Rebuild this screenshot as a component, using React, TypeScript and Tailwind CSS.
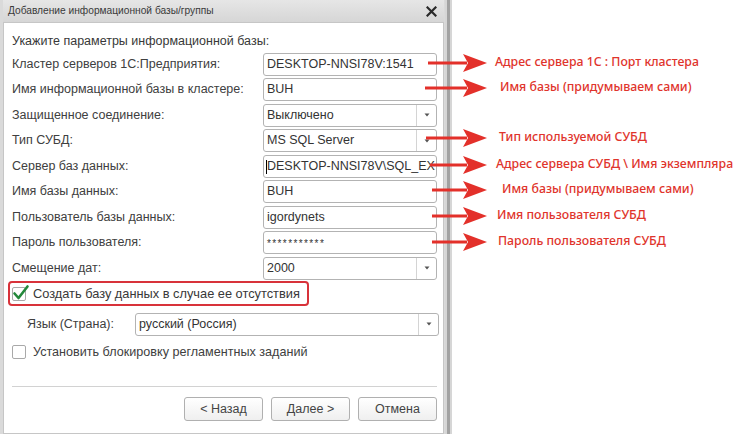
import React from 'react';

const labelFont = 'font-["Liberation_Sans",Arial,sans-serif]';

const Caret: React.FC = () => (
  <div className="w-[20px] h-full border-l border-[#d4d4d4] flex items-center justify-center">
    <svg width="6" height="4" viewBox="0 0 6 4">
      <polygon points="0.5,0.5 5.5,0.5 3,3.5" fill="#555" />
    </svg>
  </div>
);

const Field: React.FC<{ value: string; select?: boolean; cursor?: boolean; small?: boolean; width?: string }> = ({ value, select, cursor, small, width = 'w-[174px]' }) => (
  <div className={`${width} h-[23px] shrink-0 border border-[#b3b3b3] rounded-[3px] bg-white flex items-center overflow-hidden`}>
    <div className="flex-1 min-w-0 flex items-center pl-[3px] relative h-full overflow-hidden">
      {cursor && <span className="absolute left-[2px] top-[4px] w-px h-[14px] bg-black" />}
      <span className={`whitespace-nowrap text-[#333] ${small ? 'text-[10px] tracking-[1.4px] pt-[1px]' : 'text-[12.5px]'}`}>{value}</span>
    </div>
    {select && <Caret />}
  </div>
);

const Row: React.FC<{ label: string; value: string; select?: boolean; cursor?: boolean; small?: boolean }> = ({ label, ...rest }) => (
  <div className="flex items-center h-[25.5px]">
    <div className="w-[251px] shrink-0 text-[12.5px] text-[#404040] whitespace-nowrap">{label}</div>
    <Field {...rest} />
  </div>
);

const CheckBox: React.FC<{ checked?: boolean }> = ({ checked }) => (
  <div className="relative w-[14px] h-[14px] shrink-0 border border-[#a9a9a9] rounded-[2px] bg-white">
    {checked && (
      <svg className="absolute left-[-1px] top-[-4px]" width="18" height="18" viewBox="0 0 18 18">
        <path d="M2.5 9.5 L6.5 14 L15.5 2.5" fill="none" stroke="#23883a" strokeWidth="2.6" strokeLinecap="round" strokeLinejoin="round" />
      </svg>
    )}
  </div>
);

const notes = [
  { y: 63, x: 495, text: 'Адрес сервера 1С : Порт кластера', from: 428 },
  { y: 88, x: 500, text: 'Имя базы (придумываем сами)', from: 425 },
  { y: 138, x: 499, text: 'Тип используемой СУБД', from: 426 },
  { y: 165, x: 496, text: 'Адрес сервера СУБД \\ Имя экземпляра', from: 430 },
  { y: 190, x: 502, text: 'Имя базы (придумываем сами)', from: 432 },
  { y: 216, x: 497, text: 'Имя пользователя СУБД', from: 432 },
  { y: 242, x: 498, text: 'Пароль пользователя СУБД', from: 432 },
];

export default function App() {
  return (
    <div className={`relative w-[750px] h-[434px] bg-white overflow-hidden flex ${labelFont}`}>
      {/* dialog window */}
      <div className="w-[452px] h-full flex shrink-0">
        <div className="flex-1 flex flex-col bg-[#dadada] pl-[3px] pr-[1px]">
          <div className="h-[22px] flex items-center justify-between pl-[5px] pr-[7px] bg-gradient-to-b from-[#e6e6e6] to-[#d6d6d6]">
            <span className="text-[10.2px] text-[#3a3a3a]">Добавление информационной базы/группы</span>
            <svg width="11" height="11" viewBox="0 0 11 11">
              <path d="M1.5 1.5 L9.5 9.5 M9.5 1.5 L1.5 9.5" stroke="#2a2a2a" strokeWidth="2.2" strokeLinecap="square" />
            </svg>
          </div>
          <div className="flex-1 bg-white border border-[#c6c6c6] pl-[8px] pr-[4px] pt-[9px]">
            <div className="h-[18px] flex items-center text-[12.5px] text-[#383838] whitespace-nowrap">Укажите параметры информационной базы:</div>
            <div className="mt-[1.5px]">
              <Row label="Кластер серверов 1С:Предприятия:" value="DESKTOP-NNSI78V:1541" />
              <Row label="Имя информационной базы в кластере:" value="BUH" />
              <Row label="Защищенное соединение:" value="Выключено" select />
              <Row label="Тип СУБД:" value="MS SQL Server" select />
              <Row label="Сервер баз данных:" value="DESKTOP-NNSI78V\SQL_EX" cursor />
              <Row label="Имя базы данных:" value="BUH" />
              <Row label="Пользователь базы данных:" value="igordynets" />
              <Row label="Пароль пользователя:" value="***********" small />
              <Row label="Смещение дат:" value="2000" select />
            </div>
            <div className="ml-[-4px] w-[301px] h-[25px] border-2 border-[#d8323a] rounded-[4px] flex items-center pl-[2px] gap-[7px]">
              <CheckBox checked />
              <span className="text-[12.8px] text-[#383838] whitespace-nowrap">Создать базу данных в случае ее отсутствия</span>
            </div>
            <div className="mt-[6px] h-[24px] flex items-center">
              <div className="w-[123px] shrink-0 pl-[15px] text-[12.5px] text-[#404040] whitespace-nowrap">Язык (Страна):</div>
              <Field value="русский (Россия)" select width="w-[304px]" />
            </div>
            <div className="mt-[4px] h-[24px] flex items-center gap-[7px]">
              <CheckBox />
              <span className="text-[12.6px] text-[#404040] whitespace-nowrap">Установить блокировку регламентных заданий</span>
            </div>
            <div className="mt-[22px] w-[425px] h-px bg-[#d2d2d2]" />
            <div className="mt-[10px] w-[425px] flex justify-end gap-[8px]">
              {['< Назад', 'Далее >', 'Отмена'].map(t => (
                <button key={t} className="w-[79px] h-[24px] border border-[#b0b0b0] rounded-[3px] bg-gradient-to-b from-white to-[#efefef] text-[12.5px] text-[#444]">
                  {t}
                </button>
              ))}
            </div>
          </div>
        </div>
        <div className="w-[9px] h-full bg-[#d6d6d6] flex justify-center">
          <div className="w-[3px] h-full bg-[#a2a2a2]" />
        </div>
      </div>

      {/* red annotations drawn over the screenshot */}
      {notes.map(n => (
        <React.Fragment key={n.y}>
          <svg className="absolute left-0 pointer-events-none" width="750" height="20" style={{ top: n.y - 10 }} viewBox={`0 ${n.y - 10} 750 20`}>
            <line x1={n.from} y1={n.y} x2={467} y2={n.y} stroke="#e3302a" strokeWidth="3" />
            <path d={`M463 ${n.y - 9} L487 ${n.y} L463 ${n.y + 9} L468 ${n.y} Z`} fill="#e3302a" />
          </svg>
          <span
            className='absolute whitespace-nowrap text-[12.3px] font-medium text-[#e0342c] font-["Noto_Sans",sans-serif] leading-none'
            style={{ left: n.x, top: n.y - 7 }}
          >
            {n.text}
          </span>
        </React.Fragment>
      ))}
    </div>
  );
}
